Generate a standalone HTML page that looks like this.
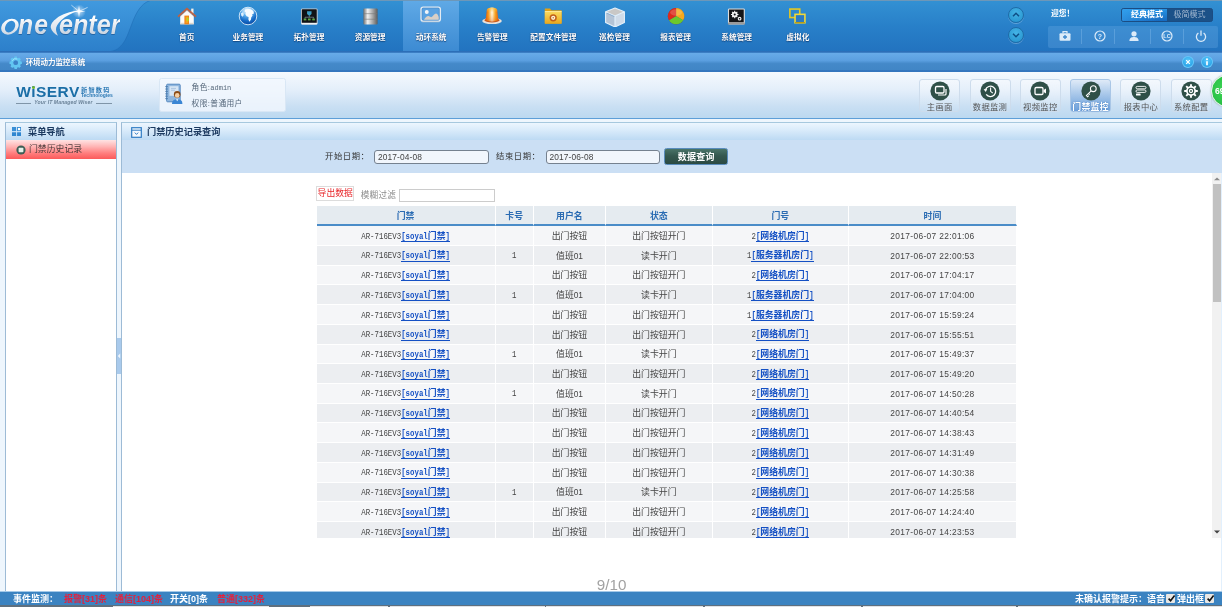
<!DOCTYPE html>
<html lang="zh-CN">
<head>
<meta charset="utf-8">
<title>OneCenter</title>
<style>
html,body{margin:0;padding:0}
body{width:1222px;height:607px;overflow:hidden;position:relative;background:#eef6fd;font-family:"Liberation Sans","Noto Sans CJK SC",sans-serif;font-size:8.9px;color:#444;line-height:1}
div,span,a{box-sizing:border-box}
.abs{position:absolute}
#root{position:absolute;left:0;top:0;width:1222px;height:607px;overflow:hidden;will-change:transform;transform:translateZ(0)}
/* header */
#hdr{position:absolute;left:0;top:0;width:1222px;height:52px;background:linear-gradient(#3391d3,#2880c9 50%,#2273bf);overflow:hidden}
#hdr .topline{position:absolute;left:0;top:0;width:1222px;height:1px;background:#6d97b8}
#logo{position:absolute;left:0;top:0;width:160px;height:52px}
.lg{position:absolute;font-family:"Liberation Sans",sans-serif;font-style:italic;font-weight:bold;white-space:nowrap;transform-origin:0 0;line-height:1;color:#e8edf3;background:linear-gradient(#fff 25%,#cdd7e3 80%);-webkit-background-clip:text;background-clip:text;-webkit-text-fill-color:transparent;filter:drop-shadow(0 1px .6px rgba(20,60,110,.45))}
.nav{position:absolute;top:0;width:56px;height:52px;text-align:center}
.nav.act{background:linear-gradient(#5fa9e6,#3c8ad2);top:1px;height:51px}
.nav .ni{position:absolute;left:0;top:6px;width:56px;height:20px;display:flex;align-items:center;justify-content:center}
.nav.act .ni{top:3.9px}
.nav .nl{position:absolute;left:-12px;width:80px;top:33.6px;font-size:7.7px;font-weight:bold;color:#fff;text-shadow:0 0 1px rgba(10,50,100,.9),0 1px 1px rgba(10,50,100,.6);white-space:nowrap;text-align:center}
.nav.act .nl{top:32.6px}
.circ{position:absolute;width:16px;height:16px;border-radius:50%;background:radial-gradient(circle at 50% 35%,#45b4e6,#2290cc);border:1px solid #1e6ca8;box-shadow:0 1px 0 rgba(255,255,255,.25)}
#welcome{position:absolute;left:1051px;top:10px;font-size:7.7px;font-weight:bold;color:#fff;white-space:nowrap}
#mode{position:absolute;left:1121px;top:8px;width:92px;height:14px;border-radius:2.5px;background:#1b5188;border:1px solid #1b4c82;overflow:hidden;font-size:8px;white-space:nowrap}
#mode .m1{position:absolute;left:0;top:0;width:45px;height:12px;background:linear-gradient(90deg,rgba(60,170,245,.55),rgba(20,100,185,0) 80%),linear-gradient(#2593e4,#166ac0);color:#fff;font-weight:bold;text-align:center;line-height:12px;padding-left:5px}
#mode .m2{position:absolute;left:45px;top:0;width:45px;height:12px;color:#9fb6cf;text-align:center;line-height:12px}
#icons{position:absolute;left:1048px;top:26px;width:170px;height:22px;border-radius:2px;background:rgba(120,180,235,.28)}
#icons .sep{position:absolute;top:3px;width:1px;height:15px;background:rgba(160,205,245,.3)}
#icons svg{position:absolute;top:3.4px}
/* second bar */
#bar2{position:absolute;left:0;top:51px;width:1222px;height:20.8px;background:linear-gradient(#2a6cb6 0,#2f72ba 6%,#67aae8 11%,#5b9fe0 45%,#4489c9 60%,#4186c6 89%,#3577bf 92%,#3375bd 100%)}
#bar2 .t{position:absolute;left:25.7px;top:7.9px;font-size:7.55px;letter-spacing:-.12px;font-weight:bold;color:#fff;white-space:nowrap;text-shadow:0 0 1px rgba(10,50,100,.5)}
.cb{position:absolute;top:5.2px;width:12px;height:12px;border-radius:50%;background:radial-gradient(circle at 50% 35%,#5cc8fa,#2fa8ea 65%,#2a98dc);border:.8px solid rgba(120,210,255,.75)}
/* toolbar */
#tool{position:absolute;left:0;top:71.8px;width:1222px;height:47.2px;background:linear-gradient(#f5f9fe 0%,#e3eefa 40%,#c9dff3 75%,#bcd9f0 100%);border-bottom:1px solid #5e9fd8}
#card{position:absolute;left:158.6px;top:6.7px;width:127px;height:33.5px;border:1px solid #d9e7f5;border-radius:2.5px;background:rgba(242,248,254,.8)}
#card .r{position:absolute;left:32px;font-size:7.7px;color:#55677a;white-space:nowrap;letter-spacing:.4px}
.tb{position:absolute;top:7.2px;width:41px;height:33.5px;border:1px solid #cddcec;border-radius:3px;background:linear-gradient(rgba(255,255,255,.35),rgba(255,255,255,.05))}
.tb .tbi{position:absolute;left:9.5px;top:1.3px}
.tb .tbl{position:absolute;left:-5px;width:49px;top:22.9px;text-align:center;font-size:8.3px;color:#555;white-space:nowrap;letter-spacing:.3px}
.tb.act{background:linear-gradient(#dfeaf7,#a9c8ea 45%,#6c9fda);border-color:#a9c6e6}
.tb.act .tbl{color:#fff;font-weight:bold;font-size:8.9px;top:22.6px;text-shadow:0 0 1px #4a80c0,0 0 1.5px #5a90d0}
/* panels */
.panel{position:absolute;border:1px solid #9dbbd6;border-top-color:#a6c8de;background:#fff}
.ph{position:absolute;left:0;top:0;right:0;height:17px;background:linear-gradient(#ecf6fe,#d8eafa 45%,#bddaf3)}
.ph .tt{position:absolute;top:5px;font-size:9.2px;font-weight:bold;color:#1c3a60;white-space:nowrap}
#mi{position:absolute;left:0;top:17px;width:100%;height:18.6px;background:linear-gradient(#ffe3e3 0%,#ffb4b4 35%,#ff7d7d 70%,#fb5a5a 100%)}
#mi .tx{position:absolute;left:23px;top:5px;font-size:8.9px;color:#4a3a3a;white-space:nowrap}
#fb{position:absolute;left:0;top:17px;right:0;height:33px;background:#cbdff4}
#fb .fl{position:absolute;top:12.1px;font-size:8.3px;color:#333;white-space:nowrap;letter-spacing:.6px}
#fb .in{position:absolute;top:9.7px;height:14px;width:114.5px;border:1px solid #75818f;border-radius:3px;background:#f1f6fc;font-size:8.3px;color:#333;line-height:12.6px;padding-left:3px;white-space:nowrap}
#qb{position:absolute;left:542.7px;top:8.2px;width:64px;height:17px;border-radius:2.5px;background:linear-gradient(#4a7468,#35584f 45%,#2b4a42);border:1px solid #5a8cbc;color:#fff;font-weight:bold;font-size:9px;text-align:center;line-height:16.2px;letter-spacing:.2px}
/* table */
#tw{position:absolute;left:0;top:50px;right:0;height:364.5px;overflow:hidden;background:#fff}
#exp{position:absolute;left:194.7px;top:12.7px;width:38px;height:15px;border:1px solid #dcdcdc;background:#fff;color:#e8262a;font-size:8.8px;text-align:center;line-height:13px;white-space:nowrap}
#flt{position:absolute;left:239.2px;top:18px;font-size:8.6px;color:#8c8c8c;white-space:nowrap;letter-spacing:.3px}
#fin{position:absolute;left:277px;top:15.9px;width:96.5px;height:13px;border:1px solid #ccc;background:#fff}
table{position:absolute;left:195.1px;top:32.3px;width:700.5px;border-collapse:separate;border-spacing:0;table-layout:fixed;font-size:8.9px}
th{height:20.7px;padding:3.6px 0 0 0;background:#e5ebf0;color:#2b6cb3;font-weight:bold;text-align:center;border-bottom:2px solid #4a8cc8;border-right:1px solid #fff;font-size:8.9px;box-sizing:border-box}
td{height:19.73px;padding:1.6px 0 0 0;text-align:center;border-right:1px solid #fff;border-bottom:1px solid #fff;color:#444;white-space:nowrap;box-sizing:border-box;vertical-align:middle}
td.k{padding:2.4px 0 0 0}
tr.o td{background:#f5f6f8}
tr.e td{background:#eceef1}
td a{color:#1450c4;font-weight:bold;text-decoration:none;display:inline-block;line-height:9px;height:10.2px;border-bottom:1px solid #1450c4;vertical-align:baseline}
.l,.lb{display:inline-block;font-family:"Liberation Mono",monospace;font-size:7.4px;letter-spacing:0;transform:scaleY(1.22);transform-origin:0 78%;line-height:1;vertical-align:baseline}
.l{color:#444}
.s{font-family:"Liberation Sans",sans-serif;font-size:8.4px;letter-spacing:-.22px;color:#444}
.t{letter-spacing:.34px}
td a{letter-spacing:0}
.br{display:inline-block;font-family:"Liberation Mono",monospace;font-size:7.4px;transform:scaleY(1.22);transform-origin:0 78%;line-height:1}
/* scrollbar */
#sb{position:absolute;right:1px;top:50px;width:9px;height:364.6px;background:#f1f1f1}
#sb .th{position:absolute;left:1px;top:10.4px;width:8px;height:118px;background:#c1c1c1}
/* status */
#status{position:absolute;left:0;top:591.4px;width:1222px;height:13.6px;background:#3b83c1;border-top:1px solid #a4c9e8;font-size:9px;font-weight:bold;color:#fff;white-space:nowrap}
#status span{position:absolute;top:2.5px}
#status .r{color:#e4203c}
#bot{position:absolute;left:0;top:605px;width:1222px;height:2px;background:#5f707e}
#pg{position:absolute;left:596.8px;top:576.6px;font-size:15.2px;color:#a2a2a2;font-family:"Liberation Sans",sans-serif;white-space:nowrap}
</style>
</head>
<body>
<div id="root">

<!-- ===== header ===== -->
<div id="hdr">
  <svg class="abs" style="left:0;top:0" width="170" height="52" viewBox="0 0 170 52">
    <defs><linearGradient id="lgl" x1="0" y1="0" x2="0" y2="1"><stop offset="0" stop-color="#419adf"/><stop offset="1" stop-color="#2c7fca"/></linearGradient></defs>
    <path d="M0 0 H152 C134 4 132 30 124 42 C120 48 116 51 108 52 H0Z" fill="url(#lgl)"/>
    <path d="M152 0 C134 4 132 30 124 42 C120 48 116 51 108 52" fill="none" stroke="#1f6cb4" stroke-width="1" opacity=".55"/>
  </svg>
  <div class="topline"></div>
  <div id="logo">
    <svg class="abs" style="left:0;top:0" width="130" height="52" viewBox="0 0 130 52">
      <defs>
        <linearGradient id="lgt" x1="0" y1="0" x2="0" y2="1"><stop offset="0" stop-color="#ffffff"/><stop offset="1" stop-color="#cfd8e4"/></linearGradient>
        <radialGradient id="glow"><stop offset="0" stop-color="#fff" stop-opacity=".95"/><stop offset=".35" stop-color="#fff" stop-opacity=".45"/><stop offset="1" stop-color="#fff" stop-opacity="0"/></radialGradient>
      </defs>
      <g transform="translate(9.9 26.7) skewX(-14)"><path fill-rule="evenodd" fill="url(#lgt)" d="M0 -8 A8.5 8 0 1 0 0 8 A8.5 8 0 1 0 0 -8Z M.2 -5.9 A4.9 5.9 0 1 1 .2 5.9 A4.9 5.9 0 1 1 .2 -5.9Z"/></g>
      <path fill="url(#lgt)" d="M58 35.8 C54.5 33.8 51.4 30.8 50.8 27.7 C50.4 24 53.4 20.6 56.4 18.4 C62 14.2 70 11.4 79 10.8 C72 12.8 65.8 16.2 60.9 20.4 C57.6 23.6 55.8 27 56 29.6 C56.2 32 57 34 58 35.8Z"/>
      <circle cx="79" cy="11.4" r="7" fill="url(#glow)"/>
      <path d="M79 5.4 L79.9 10.5 L85.4 11.4 L79.9 12.3 L79 17.4 L78.1 12.3 L72.6 11.4 L78.1 10.5Z" fill="#fff" opacity=".9"/>
      <path d="M71.4 5.2 L79 11.4 L87.6 7.4" stroke="#fff" stroke-width=".7" fill="none" opacity=".85"/>
    </svg>
    <span class="lg" style="left:18.2px;top:10.7px;font-size:27.5px;transform:scaleX(.9)">n<span style="margin-left:1.2px">e</span></span>
    <span class="lg" style="left:58.6px;top:10.7px;font-size:27.5px;transform:scaleX(.915)">enter</span>
  </div>
<div class="nav" style="left:158.8px"><div class="ni"><svg width="22" height="20" viewBox="0 0 22 20"><rect x="15.2" y="2.6" width="2.3" height="5" fill="#f3efe8"/><path d="M4.2 10 L11 4 L17.8 10 V18.3 H4.2Z" fill="#fbfaf8"/><path d="M4.2 16.8 H17.8 V18.3 H4.2Z" fill="#ddd6cc"/><rect x="8.4" y="9.6" width="4.6" height="8.7" fill="#f08418"/><rect x="9.6" y="10.6" width="2.4" height="6.4" fill="#f6a21e"/><rect x="10.6" y="11.6" width="2" height="3.6" fill="#b8d820"/><path d="M2 10.6 L11 2.6 L20 10.6" fill="none" stroke="#c4603c" stroke-width="1.5" stroke-linejoin="miter"/><path d="M3 11.4 L11 4.3 L19 11.4" fill="none" stroke="#8a4a34" stroke-width=".5" opacity=".6"/></svg></div><div class="nl">首页</div></div>
<div class="nav" style="left:219.9px"><div class="ni"><svg width="20" height="20" viewBox="0 0 20 20"><defs><radialGradient id="gl" cx="45%" cy="18%" r="85%"><stop offset="0" stop-color="#d8f0ff"/><stop offset=".35" stop-color="#5fb0ee"/><stop offset=".7" stop-color="#166cc8"/><stop offset="1" stop-color="#0a479e"/></radialGradient></defs><circle cx="10" cy="10" r="8.8" fill="url(#gl)" stroke="#dcecf8" stroke-width=".9"/><path d="M7.2 3.6 C9 2.6 12.4 2.8 14.4 4.2 C15.8 5.4 16.2 7 15.4 8 L14 8.2 L14.6 9.6 L13.2 11.4 L13 13.6 L11.4 15.8 L10.4 13.6 L10.6 11 L8.6 10.2 L7.4 8.2 L8 6.4 L6.6 5.4Z" fill="#f6fbff"/><path d="M3 7.2 C3.6 6.4 4.6 6.2 5.4 6.8 L5.8 9 L4.6 10.8 L3.2 9.6Z" fill="#eaf6ff" opacity=".9"/><ellipse cx="10" cy="5.2" rx="6.4" ry="3.2" fill="#fff" opacity=".28"/></svg></div><div class="nl">业务管理</div></div>
<div class="nav" style="left:281.0px"><div class="ni"><svg width="18.6" height="18.6" viewBox="0 0 20 20"><rect x="1" y="1.5" width="18" height="17.4" rx="1.6" fill="#c9ccd0"/><rect x="2" y="2.5" width="16" height="14.4" rx=".6" fill="#101216"/><rect x="1.4" y="17.2" width="17.2" height="1.5" rx=".7" fill="#eef0f2"/><path d="M7.6 4.6 h4.8 v3 l-2.4 2.2 l-2.4 -2.2z" fill="#3a9cc4"/><rect x="4" y="12.4" width="2.8" height="2" fill="#5fa844"/><rect x="8.6" y="12.4" width="2.8" height="2" fill="#5fa844"/><rect x="13.2" y="12.4" width="2.8" height="2" fill="#5fa844"/><path d="M10 9.6 V11 M5.4 12.4 V11 H14.6 V12.4" stroke="#8a9aa8" stroke-width=".7" fill="none"/></svg></div><div class="nl">拓扑管理</div></div>
<div class="nav" style="left:342.1px"><div class="ni"><svg width="17" height="19" viewBox="0 0 18 20"><defs><linearGradient id="cy" x1="0" x2="1"><stop offset="0" stop-color="#6e6e6e"/><stop offset=".3" stop-color="#f2f2f2"/><stop offset=".55" stop-color="#bdbdbd"/><stop offset="1" stop-color="#5c5c5c"/></linearGradient></defs><rect x="1.5" y="1.5" width="15" height="17" rx="1" fill="url(#cy)"/><rect x="1.5" y="6.6" width="15" height=".9" fill="#777" opacity=".7"/><rect x="1.5" y="12.4" width="15" height=".9" fill="#777" opacity=".7"/></svg></div><div class="nl">资源管理</div></div>
<div class="nav act" style="left:403.2px"><div class="ni"><svg width="21.4" height="17" viewBox="0 0 24 19"><rect x="1.2" y="1.2" width="21.6" height="15.8" rx="2.4" fill="#5aa2e2" stroke="#e4ebf2" stroke-width="1.6"/><rect x="2.3" y="2.3" width="19.4" height="13.6" rx="1.5" fill="none" stroke="#3a78b8" stroke-width=".6" opacity=".7"/><circle cx="7.6" cy="6.6" r="2.2" fill="#f2f4f8"/><path d="M4.5 15.4 C6 12.6 8.4 10.8 10 11.4 C11.4 11.8 12 12.8 13 12.4 C14.6 11.8 16 8.4 18 8.4 C19.6 8.4 20.6 11 21 12.6 V15.4Z" fill="#d9cfc6"/><path d="M2.4 17.9 H21.6" stroke="#9ab4cc" stroke-width=".9" opacity=".8"/></svg></div><div class="nl">动环系统</div></div>
<div class="nav" style="left:464.3px"><div class="ni"><svg width="22" height="20" viewBox="0 .9 22 20"><defs><linearGradient id="sr" x1="0" x2="1"><stop offset="0" stop-color="#d8540c"/><stop offset=".22" stop-color="#f89a1c"/><stop offset=".5" stop-color="#fffbe6"/><stop offset=".75" stop-color="#f8a420"/><stop offset="1" stop-color="#d85a0c"/></linearGradient><linearGradient id="sr2" x1="0" y1="0" x2="0" y2="1"><stop offset="0" stop-color="#f8c040" stop-opacity=".7"/><stop offset=".35" stop-color="#f8c040" stop-opacity="0"/><stop offset="1" stop-color="#d8480c" stop-opacity=".35"/></linearGradient></defs><ellipse cx="11" cy="15.8" rx="9.8" ry="3.2" fill="#e9e2da"/><ellipse cx="11" cy="15.2" rx="7.6" ry="2.2" fill="#c8581c"/><path d="M4.6 15 L5.8 5 C6 1.6 16 1.6 16.2 5 L17.4 15 C15.4 16.8 6.6 16.8 4.6 15Z" fill="url(#sr)"/><path d="M4.6 15 L5.8 5 C6 1.6 16 1.6 16.2 5 L17.4 15 C15.4 16.8 6.6 16.8 4.6 15Z" fill="url(#sr2)"/></svg></div><div class="nl">告警管理</div></div>
<div class="nav" style="left:525.4px"><div class="ni"><svg width="20" height="20" viewBox="0 0 20 20"><defs><linearGradient id="fd" x1="0" y1="0" x2="0" y2="1"><stop offset="0" stop-color="#fbdc62"/><stop offset="1" stop-color="#e9a61c"/></linearGradient></defs><path d="M1.8 2.4 H7 L8.4 4.2 H18.6 V17.6 H1.8Z" fill="#e2a114"/><rect x="1.8" y="5" width="16.8" height="12.8" rx=".9" fill="url(#fd)"/><rect x="1.8" y="5" width="16.8" height="1" fill="#fdeaa0" opacity=".8"/><circle cx="10.2" cy="11.8" r="3.6" fill="#c2601a"/><circle cx="10.2" cy="11.8" r="2.1" fill="#fdf3d6"/><circle cx="10.2" cy="11.8" r=".7" fill="#c2601a"/></svg></div><div class="nl">配置文件管理</div></div>
<div class="nav" style="left:586.5px"><div class="ni"><svg width="22" height="22" viewBox="0 -1.4 22 22"><path d="M11 1.6 L20.4 5.4 L11 9.6 L1.6 5.4Z" fill="#c9c8c6"/><path d="M1.6 5.4 L11 9.6 V20.6 L1.6 16Z" fill="#b4c4d6"/><path d="M20.4 5.4 L11 9.6 V20.6 L20.4 16Z" fill="#cfdbe8"/><path d="M11 1.6 L20.4 5.4 V16 L11 20.6 L1.6 16 V5.4Z M1.6 5.4 L11 9.6 L20.4 5.4 M11 9.6 V20.6" fill="none" stroke="#e4f1fb" stroke-width="1.1" stroke-linejoin="round"/><path d="M2.6 6.6 L10.4 10.1" stroke="#3a7ab8" stroke-width=".7" opacity=".55"/></svg></div><div class="nl">巡检管理</div></div>
<div class="nav" style="left:647.6px"><div class="ni"><svg width="18.2" height="18.2" viewBox="0 0 20 20"><circle cx="10" cy="10.3" r="9.2" fill="#7a1a10" opacity=".35"/><path d="M10 10 L10 1 A9 9 0 0 1 17.8 14.5Z" fill="#f7a81c"/><path d="M10 10 L17.8 14.5 A9 9 0 0 1 2.2 14.5Z" fill="#6cc82c"/><path d="M10 10 L2.2 14.5 A9 9 0 0 1 10 1Z" fill="#dc2a1c"/><ellipse cx="10" cy="6" rx="6.5" ry="3.6" fill="#fff" opacity=".18"/></svg></div><div class="nl">报表管理</div></div>
<div class="nav" style="left:708.7px"><div class="ni"><svg width="18.8" height="18.8" viewBox="0 0 20 20"><rect x="1" y="1.5" width="18" height="17" rx="1.5" fill="#dcdcdc"/><rect x="2.2" y="2.7" width="15.6" height="13.6" fill="#141518"/><rect x="1" y="16.6" width="18" height="2" fill="#9a9a9a"/><circle cx="8.2" cy="8" r="3" fill="#f2f2f2"/><circle cx="8.2" cy="8" r="1.1" fill="#141518"/><circle cx="13.4" cy="12.4" r="2" fill="#f2f2f2"/><circle cx="13.4" cy="12.4" r=".8" fill="#141518"/><path d="M8.2 4 V12 M4.2 8 H12.2 M5.4 5.2 L11 10.8 M11 5.2 L5.4 10.8" stroke="#f2f2f2" stroke-width="1.1"/><circle cx="8.2" cy="8" r="1.1" fill="#141518"/></svg></div><div class="nl">系统管理</div></div>
<div class="nav" style="left:769.8px"><div class="ni"><svg width="18.8" height="18.8" viewBox="0 0 20 20"><rect x="2" y="2.2" width="10.5" height="9" fill="none" stroke="#e8c820" stroke-width="1.7"/><rect x="7.5" y="7.8" width="10.5" height="9" fill="#2b7ac4" stroke="#f0d83a" stroke-width="1.7"/><rect x="7.5" y="16" width="10.5" height="1.3" fill="#b89a10"/></svg></div><div class="nl">虚拟化</div></div>
  <div class="circ" style="left:1007.5px;top:6.5px"><svg width="14" height="14" viewBox="0 0 14 14" style="position:absolute;left:0;top:0"><path d="M4 8.2 L7 5.2 L10 8.2" fill="none" stroke="#0f4f86" stroke-width="1.5"/></svg></div>
  <div class="circ" style="left:1007.5px;top:27px"><svg width="14" height="14" viewBox="0 0 14 14" style="position:absolute;left:0;top:0"><path d="M4 5.8 L7 8.8 L10 5.8" fill="none" stroke="#0f4f86" stroke-width="1.5"/></svg></div>
  <div id="welcome">迎您！</div>
  <div id="mode"><div class="m1">经典模式</div><div class="m2">极简模式</div></div>
  <div id="icons">
    <div class="sep" style="left:33px"></div><div class="sep" style="left:65.5px"></div><div class="sep" style="left:102px"></div><div class="sep" style="left:135px"></div>
    <svg style="left:10px" width="14" height="14" viewBox="0 0 14 14"><rect x="1.5" y="4.2" width="11" height="7.6" rx="1" fill="#dcebf9"/><path d="M5 4.2 V2.6 H9 V4.2" fill="none" stroke="#dcebf9" stroke-width="1.2"/><path d="M7 6 V10 M5 8 H9" stroke="#3a86cc" stroke-width="1.3"/></svg>
    <svg style="left:44.5px" width="14" height="14" viewBox="0 0 14 14"><circle cx="7" cy="7" r="5" fill="none" stroke="#dcebf9" stroke-width="1.2"/><text x="7" y="9.6" font-size="7" font-weight="bold" text-anchor="middle" fill="#dcebf9" font-family="Liberation Sans, sans-serif">?</text></svg>
    <svg style="left:79px" width="14" height="14" viewBox="0 0 14 14"><circle cx="7" cy="4.8" r="2.6" fill="#dcebf9"/><path d="M2.4 12 C2.4 8.6 5 8 7 8 C9 8 11.6 8.6 11.6 12Z" fill="#dcebf9"/></svg>
    <svg style="left:111.5px" width="14" height="14" viewBox="0 0 14 14"><circle cx="7" cy="7" r="5" fill="none" stroke="#dcebf9" stroke-width="1.2"/><text x="7" y="9.2" font-size="5.5" font-weight="bold" text-anchor="middle" fill="#dcebf9" font-family="Liberation Sans, sans-serif">LC</text></svg>
    <svg style="left:145.5px" width="14" height="14" viewBox="0 0 14 14"><path d="M4.4 4 A4.6 4.6 0 1 0 9.6 4" fill="none" stroke="#dcebf9" stroke-width="1.3"/><path d="M7 1.6 V6.8" stroke="#dcebf9" stroke-width="1.3"/></svg>
  </div>
</div>

<!-- ===== second bar ===== -->
<div id="bar2">
  <svg class="abs" style="left:9.3px;top:4.6px" width="13.4" height="13.4" viewBox="0 0 13 13"><circle cx="6.5" cy="6.5" r="3.7" fill="none" stroke="#62c6f2" stroke-width="2.7"/><path d="M6.5 .5 V3 M6.5 10 V12.5 M.5 6.5 H3 M10 6.5 H12.5 M2.25 2.25 L4 4 M9 9 L10.75 10.75 M10.75 2.25 L9 4 M4 9 L2.25 10.75" stroke="#62c6f2" stroke-width="2.5"/><circle cx="6.5" cy="6.5" r="2.1" fill="#3c82c8"/><path d="M3.2 4.6 A3.8 3.8 0 0 1 8 2.9" fill="none" stroke="#b8ecff" stroke-width=".9" opacity=".8"/></svg>
  <div class="t">环境动力监控系统</div>
  <div class="cb" style="left:1182px"><svg width="12" height="12" viewBox="0 0 12 12" style="position:absolute;left:-.8px;top:-.8px"><path d="M4.2 4.2 L7.8 7.8 M7.8 4.2 L4.2 7.8" stroke="#fff" stroke-width="1.2"/></svg></div>
  <div class="cb" style="left:1201px"><svg width="12" height="12" viewBox="0 0 12 12" style="position:absolute;left:-.8px;top:-.8px"><circle cx="6" cy="3.3" r="1" fill="#fff"/><path d="M6 5.2 V9.3" stroke="#fff" stroke-width="1.7"/></svg></div>
</div>

<!-- ===== toolbar ===== -->
<div id="tool">
  <div class="abs" style="left:16.3px;top:12.6px;width:96px;height:24px">
    <div class="abs" style="left:0;top:0;font-family:'Liberation Sans',sans-serif;font-weight:bold;font-size:15.5px;color:#1b6ea6;letter-spacing:.45px;white-space:nowrap">W<span style="color:#1b6ea6">i</span>SERV</div>
    <div class="abs" style="left:15.9px;top:1.6px;width:3px;height:3px;border-radius:50%;background:#6cb52d"></div>
    <div class="abs" style="left:64.6px;top:3px;font-size:6.2px;font-weight:bold;color:#2a78b4;white-space:nowrap;letter-spacing:1.3px">新智数码</div>
    <div class="abs" style="left:64.6px;top:9px;font-family:'Liberation Sans',sans-serif;font-size:5px;font-weight:bold;color:#2a78b4;white-space:nowrap">Technologies</div>
    <div class="abs" style="left:0;top:18.2px;width:15px;height:1px;background:#7f95a8"></div>
    <div class="abs" style="left:79.5px;top:18.2px;width:16px;height:1px;background:#7f95a8"></div>
    <div class="abs" style="left:18px;top:15.6px;font-family:'Liberation Sans',sans-serif;font-size:5.1px;font-style:italic;font-weight:bold;color:#6a8298;white-space:nowrap;letter-spacing:.1px">Your IT Managed Wiser</div>
  </div>
  <div id="card">
    <svg class="abs" style="left:4.5px;top:4px" width="20" height="22" viewBox="0 0 20 22"><rect x="2.6" y="1.2" width="13.6" height="17.6" rx="1" fill="#8fb6de" stroke="#4a80ba" stroke-width=".9"/><rect x="5.4" y="3.2" width="9" height="9.6" fill="#d6e5f4"/><path d="M7 5.4 H12 M7 7.2 H11" stroke="#9ab8d8" stroke-width=".7"/><path d="M1.2 3.6 H4 M1.2 6 H4 M1.2 8.4 H4 M1.2 10.8 H4 M1.2 13.2 H4 M1.2 15.6 H4" stroke="#4a78a8" stroke-width=".8"/><circle cx="13.2" cy="11.4" r="3.3" fill="#8a4a14"/><circle cx="13.2" cy="12.4" r="2.3" fill="#f4cfa4"/><path d="M8 21 C8 17 10.4 16.2 13.2 16.2 C16 16.2 18.4 17 18.4 21Z" fill="#3a86d4"/><path d="M12 16.3 L13.2 18.2 L14.4 16.3Z" fill="#f4f8fc"/></svg>
    <div class="r" style="top:4.8px">角色:<span style="font-family:'Liberation Mono',monospace;font-size:7px;letter-spacing:0">admin</span></div>
    <div class="r" style="top:21px">权限:普通用户</div>
  </div>
<div class="tb" style="left:919.2px"><svg class="tbi" width="20" height="20" viewBox="0 0 20 20"><circle cx="10" cy="10" r="9.6" fill="#2f5048"/><rect x="5.5" y="5.5" width="8.5" height="6.5" rx="1.2" fill="none" stroke="#fff" stroke-width="1.3"/><path d="M8 14 H15 a1 1 0 0 0 1-1 V8" fill="none" stroke="#fff" stroke-width="1.2"/></svg><div class="tbl">主画面</div></div>
<div class="tb" style="left:969.5px"><svg class="tbi" width="20" height="20" viewBox="0 0 20 20"><circle cx="10" cy="10" r="9.6" fill="#2f5048"/><path d="M5.6 8.6 A5.2 5.2 0 1 1 6.2 13.4" fill="none" stroke="#fff" stroke-width="1.3"/><path d="M10.6 6.6 V10.3 L12.8 12.2" fill="none" stroke="#fff" stroke-width="1.1"/><path d="M3.6 8.2 L7.2 8 L5.8 11Z" fill="#fff"/></svg><div class="tbl">数据监测</div></div>
<div class="tb" style="left:1019.8px"><svg class="tbi" width="20" height="20" viewBox="0 0 20 20"><circle cx="10" cy="10" r="9.6" fill="#2f5048"/><rect x="5" y="6.5" width="8" height="7" rx="1.3" fill="none" stroke="#fff" stroke-width="1.3"/><path d="M13.6 9 L16 7.4 V12.6 L13.6 11Z" fill="#fff"/></svg><div class="tbl">视频监控</div></div>
<div class="tb act" style="left:1070.1px"><svg class="tbi" width="20" height="20" viewBox="0 0 20 20"><circle cx="10" cy="10" r="9.6" fill="#2f5048"/><circle cx="12.3" cy="7.7" r="2.9" fill="none" stroke="#fff" stroke-width="1.05"/><path d="M10.2 9.8 L5.4 14.6 L6.6 15.8 L7.8 14.6 M7.6 12.4 L8.8 13.6" fill="none" stroke="#fff" stroke-width="1.05"/></svg><div class="tbl">门禁监控</div></div>
<div class="tb" style="left:1120.4px"><svg class="tbi" width="20" height="20" viewBox="0 0 20 20"><circle cx="10" cy="10" r="9.6" fill="#2f5048"/><rect x="5" y="5.4" width="10" height="2.4" rx="1.2" fill="none" stroke="#fff" stroke-width=".9"/><rect x="5" y="9" width="10" height="2.4" rx="1.2" fill="none" stroke="#fff" stroke-width=".9"/><rect x="5" y="12.6" width="4.6" height="2" rx=".4" fill="#fff"/></svg><div class="tbl">报表中心</div></div>
<div class="tb" style="left:1170.7px"><svg class="tbi" width="20" height="20" viewBox="0 0 20 20"><circle cx="10" cy="10" r="9.6" fill="#2f5048"/><path d="M10 3.2 V16.8 M3.2 10 H16.8 M5.2 5.2 L14.8 14.8 M14.8 5.2 L5.2 14.8" stroke="#fff" stroke-width="1.9"/><circle cx="10" cy="10" r="4.9" fill="#fff"/><circle cx="10" cy="10" r="2.7" fill="none" stroke="#2f5048" stroke-width="1.1"/><circle cx="10" cy="10" r=".9" fill="#2f5048"/></svg><div class="tbl">系统配置</div></div>
  <div class="abs" style="left:1210.5px;top:3.5px;width:32px;height:32px;border-radius:50%;background:radial-gradient(circle at 45% 45%,#3fd556,#2cc548 55%,#1f9c38 100%);border:1px solid #e8f6ea;box-shadow:0 0 1.5px rgba(60,90,70,.6)"><span class="abs" style="left:3.6px;top:10.5px;font-family:'Liberation Sans',sans-serif;font-size:8.6px;font-weight:bold;color:#fff">69</span></div>
</div>

<!-- ===== left panel ===== -->
<div class="panel" style="left:5px;top:122.3px;width:112px;height:469.7px">
  <div class="ph">
    <svg class="abs" style="left:6px;top:3.8px" width="9.4" height="9.4" viewBox="0 0 10 10"><rect x="0" y="0" width="4.4" height="4.4" fill="#3a8fd6"/><rect x="5.8" y=".5" width="3.4" height="3.4" fill="#fff" stroke="#3a8fd6" stroke-width="1"/><rect x="0" y="5.6" width="4.4" height="4.4" fill="#2f86d0"/><rect x="5.4" y="5.6" width="4.4" height="4.4" fill="#2f86d0"/></svg>
    <div class="tt" style="left:22px">菜单导航</div>
  </div>
  <div id="mi">
    <svg class="abs" style="left:9.5px;top:4.5px" width="10" height="10" viewBox="0 0 10 10"><circle cx="5" cy="5" r="4.6" fill="#3c5e55"/><rect x="2.6" y="2.8" width="4.8" height="4.4" rx=".8" fill="#e6efe9"/></svg>
    <div class="tx">门禁历史记录</div>
  </div>
</div>

<!-- splitter handle -->
<div class="abs" style="left:117px;top:338px;width:3.5px;height:36px;background:#a9caec"></div>
<svg class="abs" style="left:117px;top:352px" width="4" height="8" viewBox="0 0 4 8"><path d="M3.2 1.5 L.8 4 L3.2 6.5Z" fill="#eef6fd"/></svg>

<!-- ===== main panel ===== -->
<div class="panel" style="left:120.5px;top:122.3px;width:1101.5px;height:469.7px;border-right:none">
  <div class="ph">
    <svg class="abs" style="left:9.5px;top:3.5px" width="11" height="11" viewBox="0 0 11 11"><rect x=".7" y=".7" width="9.6" height="9.6" fill="#f4f9fe" stroke="#2f7cc4" stroke-width="1.2"/><path d="M.7 3.2 H10.3" stroke="#2f7cc4" stroke-width="1"/><path d="M3.8 5.6 L5.5 7.4 L7.2 5.6" fill="none" stroke="#2f7cc4" stroke-width="1"/></svg>
    <div class="tt" style="left:25.5px">门禁历史记录查询</div>
  </div>
  <div id="fb">
    <div class="fl" style="left:203.5px">开始日期：</div>
    <div class="in" style="left:252.5px"><span class="s" style="letter-spacing:.12px">2017-04-08</span></div>
    <div class="fl" style="left:374.5px">结束日期：</div>
    <div class="in" style="left:424px"><span class="s" style="letter-spacing:.12px">2017-06-08</span></div>
    <div id="qb">数据查询</div>
  </div>
  <div id="tw">
    <div id="exp">导出数据</div>
    <div id="flt">模糊过滤</div>
    <div id="fin"></div>
    <table>
      <colgroup><col style="width:179px"><col style="width:38.3px"><col style="width:72px"><col style="width:106.8px"><col style="width:136.2px"><col style="width:168.2px"></colgroup>
      <thead><tr><th>门禁</th><th>卡号</th><th>用户名</th><th>状态</th><th>门号</th><th>时间</th></tr></thead>
      <tbody>
<tr class="o"><td class="k"><span class="l">AR-716EV3</span><a><span class="lb">[soyal</span>门禁<span class="lb">]</span></a></td><td><span class="l"></span></td><td>出门按钮</td><td>出门按钮开门</td><td class="k"><span class="l">2</span><a><span class="lb">[</span>网络机房门<span class="lb">]</span></a></td><td><span class="s t">2017-06-07 22:01:06</span></td></tr>
<tr class="e"><td class="k"><span class="l">AR-716EV3</span><a><span class="lb">[soyal</span>门禁<span class="lb">]</span></a></td><td><span class="l">1</span></td><td>值班<span class="s">01</span></td><td>读卡开门</td><td class="k"><span class="l">1</span><a><span class="lb">[</span>服务器机房门<span class="lb">]</span></a></td><td><span class="s t">2017-06-07 22:00:53</span></td></tr>
<tr class="o"><td class="k"><span class="l">AR-716EV3</span><a><span class="lb">[soyal</span>门禁<span class="lb">]</span></a></td><td><span class="l"></span></td><td>出门按钮</td><td>出门按钮开门</td><td class="k"><span class="l">2</span><a><span class="lb">[</span>网络机房门<span class="lb">]</span></a></td><td><span class="s t">2017-06-07 17:04:17</span></td></tr>
<tr class="e"><td class="k"><span class="l">AR-716EV3</span><a><span class="lb">[soyal</span>门禁<span class="lb">]</span></a></td><td><span class="l">1</span></td><td>值班<span class="s">01</span></td><td>读卡开门</td><td class="k"><span class="l">1</span><a><span class="lb">[</span>服务器机房门<span class="lb">]</span></a></td><td><span class="s t">2017-06-07 17:04:00</span></td></tr>
<tr class="o"><td class="k"><span class="l">AR-716EV3</span><a><span class="lb">[soyal</span>门禁<span class="lb">]</span></a></td><td><span class="l"></span></td><td>出门按钮</td><td>出门按钮开门</td><td class="k"><span class="l">1</span><a><span class="lb">[</span>服务器机房门<span class="lb">]</span></a></td><td><span class="s t">2017-06-07 15:59:24</span></td></tr>
<tr class="e"><td class="k"><span class="l">AR-716EV3</span><a><span class="lb">[soyal</span>门禁<span class="lb">]</span></a></td><td><span class="l"></span></td><td>出门按钮</td><td>出门按钮开门</td><td class="k"><span class="l">2</span><a><span class="lb">[</span>网络机房门<span class="lb">]</span></a></td><td><span class="s t">2017-06-07 15:55:51</span></td></tr>
<tr class="o"><td class="k"><span class="l">AR-716EV3</span><a><span class="lb">[soyal</span>门禁<span class="lb">]</span></a></td><td><span class="l">1</span></td><td>值班<span class="s">01</span></td><td>读卡开门</td><td class="k"><span class="l">2</span><a><span class="lb">[</span>网络机房门<span class="lb">]</span></a></td><td><span class="s t">2017-06-07 15:49:37</span></td></tr>
<tr class="e"><td class="k"><span class="l">AR-716EV3</span><a><span class="lb">[soyal</span>门禁<span class="lb">]</span></a></td><td><span class="l"></span></td><td>出门按钮</td><td>出门按钮开门</td><td class="k"><span class="l">2</span><a><span class="lb">[</span>网络机房门<span class="lb">]</span></a></td><td><span class="s t">2017-06-07 15:49:20</span></td></tr>
<tr class="o"><td class="k"><span class="l">AR-716EV3</span><a><span class="lb">[soyal</span>门禁<span class="lb">]</span></a></td><td><span class="l">1</span></td><td>值班<span class="s">01</span></td><td>读卡开门</td><td class="k"><span class="l">2</span><a><span class="lb">[</span>网络机房门<span class="lb">]</span></a></td><td><span class="s t">2017-06-07 14:50:28</span></td></tr>
<tr class="e"><td class="k"><span class="l">AR-716EV3</span><a><span class="lb">[soyal</span>门禁<span class="lb">]</span></a></td><td><span class="l"></span></td><td>出门按钮</td><td>出门按钮开门</td><td class="k"><span class="l">2</span><a><span class="lb">[</span>网络机房门<span class="lb">]</span></a></td><td><span class="s t">2017-06-07 14:40:54</span></td></tr>
<tr class="o"><td class="k"><span class="l">AR-716EV3</span><a><span class="lb">[soyal</span>门禁<span class="lb">]</span></a></td><td><span class="l"></span></td><td>出门按钮</td><td>出门按钮开门</td><td class="k"><span class="l">2</span><a><span class="lb">[</span>网络机房门<span class="lb">]</span></a></td><td><span class="s t">2017-06-07 14:38:43</span></td></tr>
<tr class="e"><td class="k"><span class="l">AR-716EV3</span><a><span class="lb">[soyal</span>门禁<span class="lb">]</span></a></td><td><span class="l"></span></td><td>出门按钮</td><td>出门按钮开门</td><td class="k"><span class="l">2</span><a><span class="lb">[</span>网络机房门<span class="lb">]</span></a></td><td><span class="s t">2017-06-07 14:31:49</span></td></tr>
<tr class="o"><td class="k"><span class="l">AR-716EV3</span><a><span class="lb">[soyal</span>门禁<span class="lb">]</span></a></td><td><span class="l"></span></td><td>出门按钮</td><td>出门按钮开门</td><td class="k"><span class="l">2</span><a><span class="lb">[</span>网络机房门<span class="lb">]</span></a></td><td><span class="s t">2017-06-07 14:30:38</span></td></tr>
<tr class="e"><td class="k"><span class="l">AR-716EV3</span><a><span class="lb">[soyal</span>门禁<span class="lb">]</span></a></td><td><span class="l">1</span></td><td>值班<span class="s">01</span></td><td>读卡开门</td><td class="k"><span class="l">2</span><a><span class="lb">[</span>网络机房门<span class="lb">]</span></a></td><td><span class="s t">2017-06-07 14:25:58</span></td></tr>
<tr class="o"><td class="k"><span class="l">AR-716EV3</span><a><span class="lb">[soyal</span>门禁<span class="lb">]</span></a></td><td><span class="l"></span></td><td>出门按钮</td><td>出门按钮开门</td><td class="k"><span class="l">2</span><a><span class="lb">[</span>网络机房门<span class="lb">]</span></a></td><td><span class="s t">2017-06-07 14:24:40</span></td></tr>
<tr class="e"><td class="k"><span class="l">AR-716EV3</span><a><span class="lb">[soyal</span>门禁<span class="lb">]</span></a></td><td><span class="l"></span></td><td>出门按钮</td><td>出门按钮开门</td><td class="k"><span class="l">2</span><a><span class="lb">[</span>网络机房门<span class="lb">]</span></a></td><td><span class="s t">2017-06-07 14:23:53</span></td></tr>
      </tbody>
    </table>
  </div>
  <div id="sb">
    <svg class="abs" style="left:2px;top:3.6px" width="6" height="4" viewBox="0 0 6 4"><path d="M0 3.2 L3 .4 L6 3.2Z" fill="#8a8a8a"/></svg>
    <div class="th"></div>
    <svg class="abs" style="left:2px;top:356.6px" width="6" height="4" viewBox="0 0 6 4"><path d="M0 .6 L3 3.4 L6 .6Z" fill="#444"/></svg>
  </div>
  <div class="abs" style="right:0;top:50px;width:1px;height:420px;background:#e2f0fd"></div>
</div>

<div id="pg">9/10</div>

<!-- ===== status bar ===== -->
<div id="status">
  <span style="left:13px">事件监测：</span>
  <span class="r" style="left:64px">报警<b class="sl">[31]</b>条</span>
  <span class="r" style="left:115px">通信<b class="sl">[104]</b>条</span>
  <span style="left:170px">开关<b class="sl">[0]</b>条</span>
  <span class="r" style="left:217px">普通<b class="sl">[332]</b>条</span>
  <span style="left:1075px">未确认报警提示：语音</span>
  <span style="left:1166px;top:1.6px;width:9.4px;height:9.4px;background:#e9e7e4;border-radius:1px"></span>
  <svg class="abs" style="left:1167px;top:2px" width="9" height="9" viewBox="0 0 9 9"><path d="M1.6 4.6 L3.6 6.8 L7.6 1.6" fill="none" stroke="#111" stroke-width="1.6"/></svg>
  <span style="left:1177px">弹出框</span>
  <span style="left:1204.6px;top:1.6px;width:9.4px;height:9.4px;background:#e9e7e4;border-radius:1px"></span>
  <svg class="abs" style="left:1205.6px;top:2px" width="9" height="9" viewBox="0 0 9 9"><path d="M1.6 4.6 L3.6 6.8 L7.6 1.6" fill="none" stroke="#111" stroke-width="1.6"/></svg>
</div>
<div id="bot"></div>
<div class="abs" style="left:113px;top:606px;width:155.5px;height:1px;background:#dfe3e7"></div>
<div class="abs" style="left:309.5px;top:606px;width:78px;height:1px;background:#dfe3e7"></div>
<div class="abs" style="left:389.5px;top:606px;width:155px;height:1px;background:#dfe3e7"></div>
<div class="abs" style="left:546px;top:606px;width:157px;height:1px;background:#dfe3e7"></div>
<div class="abs" style="left:705px;top:606px;width:156px;height:1px;background:#dfe3e7"></div>
<div class="abs" style="left:863px;top:606px;width:153px;height:1px;background:#dfe3e7"></div>
<div class="abs" style="left:1018px;top:606px;width:204px;height:1px;background:#dfe3e7"></div>

</div>
</body>
</html>
